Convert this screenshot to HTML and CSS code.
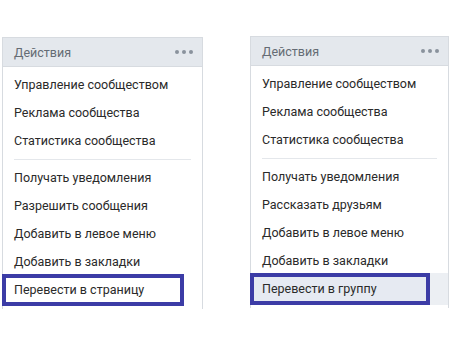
FILE: index.html
```html
<!DOCTYPE html>
<html lang="ru">
<head>
  <meta charset="UTF-8">
  <title>Действия</title>
  <link rel="stylesheet" href="styles.css">
</head>
<body>

  <div class="panels">

    <div class="panel panel-left">
      <div class="panel-head">
        <span>Действия</span>
        <span class="dots"><i></i><i></i><i></i></span>
      </div>
      <ul class="menu">
        <li>Управление сообществом</li>
        <li>Реклама сообщества</li>
        <li>Статистика сообщества</li>
        <li class="sep"></li>
        <li>Получать уведомления</li>
        <li>Разрешить сообщения</li>
        <li>Добавить в левое меню</li>
        <li>Добавить в закладки</li>
        <li class="marked"><span class="mark">Перевести в страницу</span></li>
      </ul>
    </div>

    <div class="panel panel-right">
      <div class="panel-head">
        <span>Действия</span>
        <span class="dots"><i></i><i></i><i></i></span>
      </div>
      <ul class="menu">
        <li>Управление сообществом</li>
        <li>Реклама сообщества</li>
        <li>Статистика сообщества</li>
        <li class="sep"></li>
        <li>Получать уведомления</li>
        <li>Рассказать друзьям</li>
        <li>Добавить в левое меню</li>
        <li>Добавить в закладки</li>
        <li class="marked hovered"><span class="mark">Перевести в группу</span></li>
      </ul>
    </div>

  </div>

</body>
</html>
```

FILE: styles.css
```css
body {
  margin: 0;
  background: #fff;
  font-family: Roboto, "Open Sans", sans-serif;
  font-size: 12.5px;
  color: #2a2a2a;
}

.panels {
  display: flex;
  align-items: flex-start;
  padding: 37px 0 0 2px;
  gap: 47px;
}

.panel {
  border: 1px solid #d7dbe0;
  border-bottom: none;
  padding-bottom: 5px;
}

.panel-left {
  width: 199px;
}

.panel-right {
  width: 197px;
  margin-top: -1px;
}

.panel-head {
  display: flex;
  align-items: center;
  justify-content: space-between;
  height: 28px;
  padding: 0 9px 0 11px;
  background: #e4e8ed;
  border-bottom: 1px solid #d7dbe0;
  color: #656c74;
}

.dots {
  display: flex;
  gap: 3px;
}

.dots i {
  width: 4px;
  height: 4px;
  border-radius: 50%;
  background: #8a929c;
}

.menu {
  list-style: none;
  margin: 0;
  padding: 4px 0 0;
}

.menu li {
  height: 28px;
  line-height: 28px;
  padding-left: 11px;
  white-space: nowrap;
}

.menu li.sep {
  height: 0;
  margin: 4px 11px;
  padding: 0;
  border-top: 1px solid #e4e7eb;
}

.menu li.marked {
  height: 32px;
  margin: -2px 0;
  padding-left: 0;
  line-height: 24px;
}

.menu li.hovered {
  background: #eceff3;
}

.mark {
  display: block;
  box-sizing: border-box;
  width: 182px;
  height: 32px;
  margin-left: -1px;
  padding-left: 8px;
  border: 4px solid #3c3ca6;
  background: #fff;
}

.hovered .mark {
  width: 180px;
  background: #e6eaf2;
}
```
